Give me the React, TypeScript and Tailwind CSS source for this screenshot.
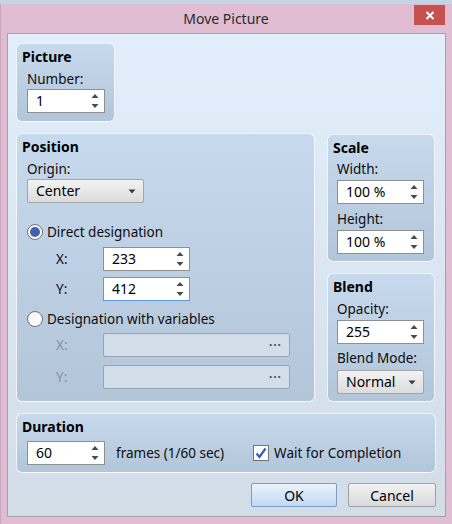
import React from "react"

type BoxProps = {
  className?: string
  children?: React.ReactNode
}

const Arrows = () => (
  <svg width="8" height="16" viewBox="0 0 8 16" className="shrink-0">
    <path d="M0.5 5 L4 1 L7.5 5 Z" fill="#4a4a4a" />
    <path d="M0.5 11 L4 15 L7.5 11 Z" fill="#4a4a4a" />
  </svg>
)

const DownArrow = () => (
  <svg width="8" height="5" viewBox="0 0 8 5" className="shrink-0">
    <path d="M0.5 0.5 L7.5 0.5 L4 4.5 Z" fill="#3c3c3c" />
  </svg>
)

function Spin({ value, className = "", focus = false }: { value: string; className?: string; focus?: boolean }) {
  return (
    <div
      className={`flex h-[24px] items-center justify-between border bg-white pl-[8px] pr-[5px] ${
        focus ? "border-[#5d9be0]" : "border-[#8e8f91]"
      } ${className}`}
    >
      <span className="text-[14px] leading-[16px] text-black">{value}</span>
      <Arrows />
    </div>
  )
}

function Combo({ value, className = "" }: { value: string; className?: string }) {
  return (
    <div
      className={`flex h-[24px] items-center justify-between rounded-[2px] border border-[#a3a5a8] bg-linear-to-b from-[#f3f3f3] to-[#dcdcdc] pl-[8px] pr-[7px] ${className}`}
    >
      <span className="text-[14px] leading-[16px] text-black">{value}</span>
      <DownArrow />
    </div>
  )
}

function Disabled({ className = "" }: BoxProps) {
  return (
    <div
      className={`flex h-[24px] items-center justify-end rounded-[2px] border border-[#9ba4ad] bg-[#d1dde8] pr-[7px] ${className}`}
    >
      <span className="text-[12px] font-bold leading-[10px] tracking-[1px] text-[#4a4f55]">···</span>
    </div>
  )
}

function Group({ title, className = "", children }: BoxProps & { title: string }) {
  return (
    <div
      className={`rounded-[6px] border border-white/80 bg-linear-to-b from-[#c7d9ed] to-[#b2c5d9] pl-[5px] pt-[4px] ${className}`}
    >
      <div className="text-[14px] font-bold leading-[18px] text-black">{title}</div>
      {children}
    </div>
  )
}

function Label({ children, className = "" }: BoxProps) {
  return <div className={`text-[13.5px] leading-[16px] text-[#0d0d0d] ${className}`}>{children}</div>
}

function Radio({ checked, label, className = "" }: { checked?: boolean; label: string; className?: string }) {
  return (
    <div className={`flex h-[16px] items-center gap-[4px] ${className}`}>
      <div className="flex h-[16px] w-[16px] items-center justify-center rounded-full border border-[#6f7378] bg-linear-to-b from-[#f4f4f4] to-white">
        {checked && <div className="h-[10px] w-[10px] rounded-full bg-[#3e63b3]" />}
      </div>
      <span className="text-[13.5px] leading-[16px] text-[#0d0d0d]">{label}</span>
    </div>
  )
}

export default function App() {
  return (
    <div className="h-[524px] w-[452px] bg-[#c4d6e6] pt-[4px] font-['Noto_Sans',sans-serif]">
      <div className="flex h-[520px] flex-col border-l border-[#c9a6bd] bg-[#e0bdd3]">
        {/* title bar */}
        <div className="flex h-[29px] items-start">
          <div className="w-[37px]" />
          <div className="flex-1 pt-[6px] text-center text-[14px] leading-[18px] text-[#2b2b2b]">Move Picture</div>
          <div className="mr-[7px] mt-[1px] flex h-[20px] w-[31px] items-center justify-center bg-[#c75050]">
            <svg width="10" height="9" viewBox="0 0 10 9">
              <path d="M1.5 1 L8.5 8 M8.5 1 L1.5 8" stroke="white" strokeWidth="2" />
            </svg>
          </div>
        </div>

        {/* client */}
        <div className="mx-[6px] h-[484px] border border-[#a99fa7] bg-linear-to-b from-[#e2eefb] to-[#d2dde8] pl-[8px] pr-[8px] pt-[9px]">
          <Group title="Picture" className="h-[79px] w-[99px]">
            <div className="pl-[5px]">
              <Label className="mt-[5px]">Number:</Label>
              <Spin value="1" className="mt-[2px] w-[78px]" />
            </div>
          </Group>

          <div className="mt-[11px] flex gap-[12px]">
            <Group title="Position" className="h-[269px] w-[299px]">
              <div className="pl-[5px]">
                <Label className="mt-[5px]">Origin:</Label>
                <Combo value="Center" className="mt-[2px] w-[117px]" />
                <Radio checked label="Direct designation" className="mt-[21px]" />
                <div className="mt-[7px] flex items-center">
                  <Label className="w-[76px] pl-[29px]">X:</Label>
                  <Spin value="233" className="w-[87px]" />
                </div>
                <div className="mt-[6px] flex items-center">
                  <Label className="w-[76px] pl-[29px]">Y:</Label>
                  <Spin value="412" focus className="w-[87px]" />
                </div>
                <Radio label="Designation with variables" className="mt-[10px]" />
                <div className="mt-[6px] flex items-center">
                  <Label className="w-[76px] pl-[29px] !text-[#8493a2]">X:</Label>
                  <Disabled className="w-[187px]" />
                </div>
                <div className="mt-[8px] flex items-center">
                  <Label className="w-[76px] pl-[29px] !text-[#8493a2]">Y:</Label>
                  <Disabled className="h-[23px] w-[187px]" />
                </div>
              </div>
            </Group>

            <div className="mt-[1px] flex w-[108px] flex-col gap-[11px]">
              <Group title="Scale" className="h-[128px]">
                <div className="pl-[4px]">
                  <Label className="mt-[4px]">Width:</Label>
                  <Spin value="100 %" className="mt-[3px] w-[87px]" />
                  <Label className="mt-[7px]">Height:</Label>
                  <Spin value="100 %" className="mt-[3px] w-[87px]" />
                </div>
              </Group>
              <Group title="Blend" className="h-[129px]">
                <div className="pl-[4px]">
                  <Label className="mt-[5px]">Opacity:</Label>
                  <Spin value="255" className="mt-[3px] w-[87px]" />
                  <Label className="mt-[6px]">Blend Mode:</Label>
                  <Combo value="Normal" className="mt-[4px] w-[87px]" />
                </div>
              </Group>
            </div>
          </div>

          <Group title="Duration" className="mt-[11px] h-[60px] w-[420px]">
            <div className="mt-[5px] flex items-center pl-[5px]">
              <Spin value="60" className="w-[78px]" />
              <Label className="ml-[11px]">frames (1/60 sec)</Label>
              <div className="ml-[29px] flex h-[16px] w-[16px] items-center justify-center border border-[#707478] bg-white">
                <svg width="12" height="12" viewBox="0 0 12 12">
                  <path d="M1.5 6.5 L4.5 10 L10.5 1.5" fill="none" stroke="#2f5fb3" strokeWidth="2.2" />
                </svg>
              </div>
              <Label className="ml-[5px]">Wait for Completion</Label>
            </div>
          </Group>

          <div className="mt-[10px] flex justify-end gap-[11px] pr-[1px]">
            <div className="flex h-[24px] w-[86px] items-center justify-center rounded-[2px] border border-[#7a9ec4] bg-linear-to-b from-[#eaf3fc] to-[#c0d9f3] text-[14px] text-black">
              OK
            </div>
            <div className="flex h-[24px] w-[88px] items-center justify-center rounded-[2px] border border-[#a0a2a5] bg-linear-to-b from-[#f2f2f2] to-[#d9d9d9] text-[14px] text-black">
              Cancel
            </div>
          </div>
        </div>
      </div>
    </div>
  )
}
